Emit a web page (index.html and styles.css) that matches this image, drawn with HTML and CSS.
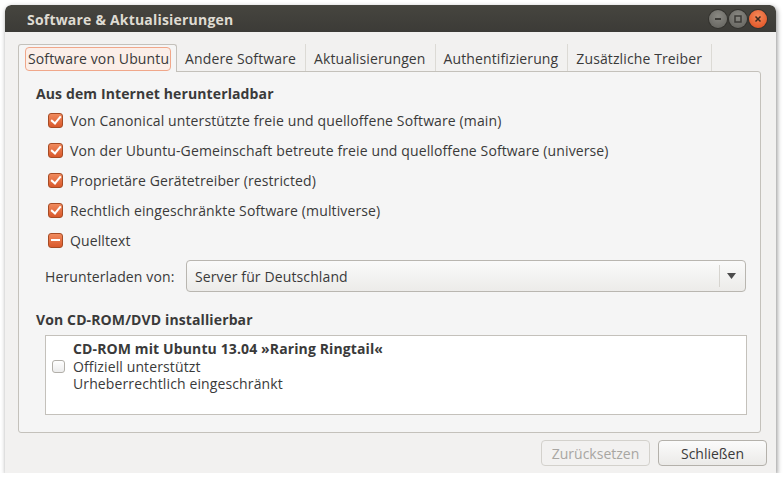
FILE: index.html
```html
<!DOCTYPE html>
<html lang="de">
<head>
	<meta charset="UTF-8">
	<title>Software &amp; Aktualisierungen</title>
	<link rel="stylesheet" href="styles.css">
</head>
<body>
	<div class="window">
		<div class="titlebar">
			<span class="title">Software &amp; Aktualisierungen</span>
			<div class="wm-buttons">
				<span class="wm wm-min"><svg width="10" height="10" viewBox="0 0 10 10"><path d="M2 5h6" stroke="#3c3b37" stroke-width="2"/></svg></span>
				<span class="wm wm-max"><svg width="10" height="10" viewBox="0 0 10 10"><rect x="2" y="2" width="6" height="6" fill="none" stroke="#3c3b37" stroke-width="1.5"/></svg></span>
				<span class="wm wm-close"><svg width="10" height="10" viewBox="0 0 10 10"><path d="M2.5 2.5l5 5M7.5 2.5l-5 5" stroke="#3c2a20" stroke-width="1.5"/></svg></span>
			</div>
		</div>
		<div class="content">
			<div class="notebook">
				<ul class="tabs">
					<li class="tab active"><span>Software von Ubuntu</span></li>
					<li class="tab"><span>Andere Software</span></li>
					<li class="tab"><span>Aktualisierungen</span></li>
					<li class="tab"><span>Authentifizierung</span></li>
					<li class="tab"><span>Zusätzliche Treiber</span></li>
				</ul>
				<div class="page">
					<h3>Aus dem Internet herunterladbar</h3>
					<ul class="sources">
						<li><span class="check on"></span>Von Canonical unterstützte freie und quelloffene Software (main)</li>
						<li><span class="check on"></span>Von der Ubuntu-Gemeinschaft betreute freie und quelloffene Software (universe)</li>
						<li><span class="check on"></span>Proprietäre Gerätetreiber (restricted)</li>
						<li><span class="check on"></span>Rechtlich eingeschränkte Software (multiverse)</li>
						<li><span class="check mixed"></span>Quelltext</li>
					</ul>
					<div class="mirror">
						<span class="mirror-label">Herunterladen von:</span>
						<div class="combo">
							<span class="combo-text">Server für Deutschland</span>
							<span class="combo-arrow"><svg width="9" height="6" viewBox="0 0 9 6"><path d="M0 0h9L4.5 6z" fill="#4c4c4c"/></svg></span>
						</div>
					</div>
					<h3 class="cd-head">Von CD-ROM/DVD installierbar</h3>
					<div class="cdlist">
						<div class="cd-row">
							<span class="check off"></span>
							<div class="cd-text">
								<b>CD-ROM mit Ubuntu 13.04 »Raring Ringtail«</b>
								<span>Offiziell unterstützt</span>
								<span>Urheberrechtlich eingeschränkt</span>
							</div>
						</div>
					</div>
				</div>
			</div>
			<div class="actions">
				<button class="btn" disabled>Zurücksetzen</button>
				<button class="btn">Schließen</button>
			</div>
		</div>
	</div>
</body>
</html>
```

FILE: styles.css
```css
*{ margin: 0; padding: 0; box-sizing: border-box;}
body{ background: #fff; font-family: "Open Sans", "DejaVu Sans", sans-serif; font-size: 14px; letter-spacing: 0.12px; color: #3a3a3a;}
ul{ list-style: none;}

.window{ width: 771px; height: 468px; margin: 5px 0 0 5px; border-radius: 6px 6px 0 0; background: #f2f1f0; box-shadow: 1px 2px 5px rgba(0,0,0,0.45); display: flex; flex-direction: column; overflow: hidden;}

.titlebar{ flex: none; height: 27px; background: linear-gradient(#46453f, #3c3b37); display: flex; align-items: center; justify-content: space-between; padding: 1px 9px 0 22px; border-radius: 6px 6px 0 0;}
.title{ color: #dfdbd2; font-weight: 700; font-size: 14px; letter-spacing: 0.2px;}
.wm-buttons{ display: flex; gap: 2px;}
.wm{ width: 18px; height: 18px; border-radius: 50%; display: flex; align-items: center; justify-content: center; background: radial-gradient(circle at 50% 35%, #8a8983, #605f5a); box-shadow: 0 0 0 1px #33322e;}
.wm-close{ background: radial-gradient(circle at 50% 35%, #f48a5a, #df4a1c);}

.content{ flex: 1; min-height: 0; display: flex; flex-direction: column; padding: 12px 15px 7px 13px;}

.notebook{ flex: 1; min-height: 0; display: flex; flex-direction: column;}
.tabs{ flex: none; display: flex; height: 27px; position: relative; z-index: 1;}
.tab{ padding: 1px 9px 0 8px; border-right: 1px solid #dcdad5; display: flex; align-items: center; color: #3a3a3a; white-space: nowrap;}
.tab.active{ background: #f5f5f5; border: 1px solid #c4c1bb; border-bottom: 0; border-radius: 3px 3px 0 0; height: 28px; padding: 0 5px 0 6px;}
.tab.active span{ border: 1px solid #f0a78a; border-radius: 4px; background: #fbeee8; padding: 1px 1px 2px 2px;}

.page{ flex: 1; min-height: 0; background: #f5f5f5; border: 1px solid #c4c1bb; border-radius: 0 3px 3px 3px; padding: 12px 12px 16px 17px; display: flex; flex-direction: column;}
h3{ font-size: 14px; font-weight: 700; color: #3a3a3a; line-height: 20px;}

.sources{ padding: 1px 0 0 12px;}
.sources li{ display: flex; align-items: center; height: 30px; gap: 7px;}

.check{ width: 15px; height: 15px; border-radius: 3px; display: inline-block; flex: none; position: relative;}
.check.on, .check.mixed{ background: linear-gradient(#f08a5d, #d9582b); border: 1px solid #a64b24;}
.check.on::after{ content: ""; position: absolute; left: 3.5px; top: 0.5px; width: 4px; height: 8px; border: solid #fff; border-width: 0 2px 2px 0; transform: rotate(40deg);}
.check.mixed::after{ content: ""; position: absolute; left: 2px; right: 2px; top: 5px; height: 2px; background: #fff;}
.check.off{ background: linear-gradient(#fff, #ececec); border: 1px solid #b2afa9;}

.mirror{ display: flex; align-items: center; gap: 13px; margin: 5px 0 0 9px;}
.mirror-label{ flex: none; width: 128px; white-space: nowrap;}
.combo{ flex: none; width: 560px; height: 32px; border: 1px solid #b9b6b0; border-radius: 4px; background: linear-gradient(#fafafa, #ecebe9); display: flex; align-items: center; padding-left: 8px;}
.combo-text{ flex: 1;}
.combo-arrow{ width: 24px; height: 22px; border-left: 1px solid #d6d4cf; display: flex; align-items: center; justify-content: center; margin-right: 2px;}

.cd-head{ margin-top: 18px;}
.cdlist{ margin: 5px 0 0 9px; height: 80px; width: 702px; background: #fff; border: 1px solid #c4c1bb;}
.cd-row{ display: flex; align-items: center; gap: 8px; padding: 4px 0 0 6px;}
.cd-row .check{ width: 13px; height: 13px;}
.cd-text{ display: flex; flex-direction: column; line-height: 17.5px;}

.actions{ flex: none; display: flex; justify-content: flex-end; gap: 8px; padding-top: 7px; margin-right: -6px;}
.btn{ width: 109px; height: 26px; font: inherit; color: #3a3a3a; border: 1px solid #b4b1ab; border-radius: 4px; background: linear-gradient(#fbfbfb, #ebeae8);}
.btn[disabled]{ color: #a8a6a2; border-color: #d3d1cc; background: #f2f1f0;}
```
